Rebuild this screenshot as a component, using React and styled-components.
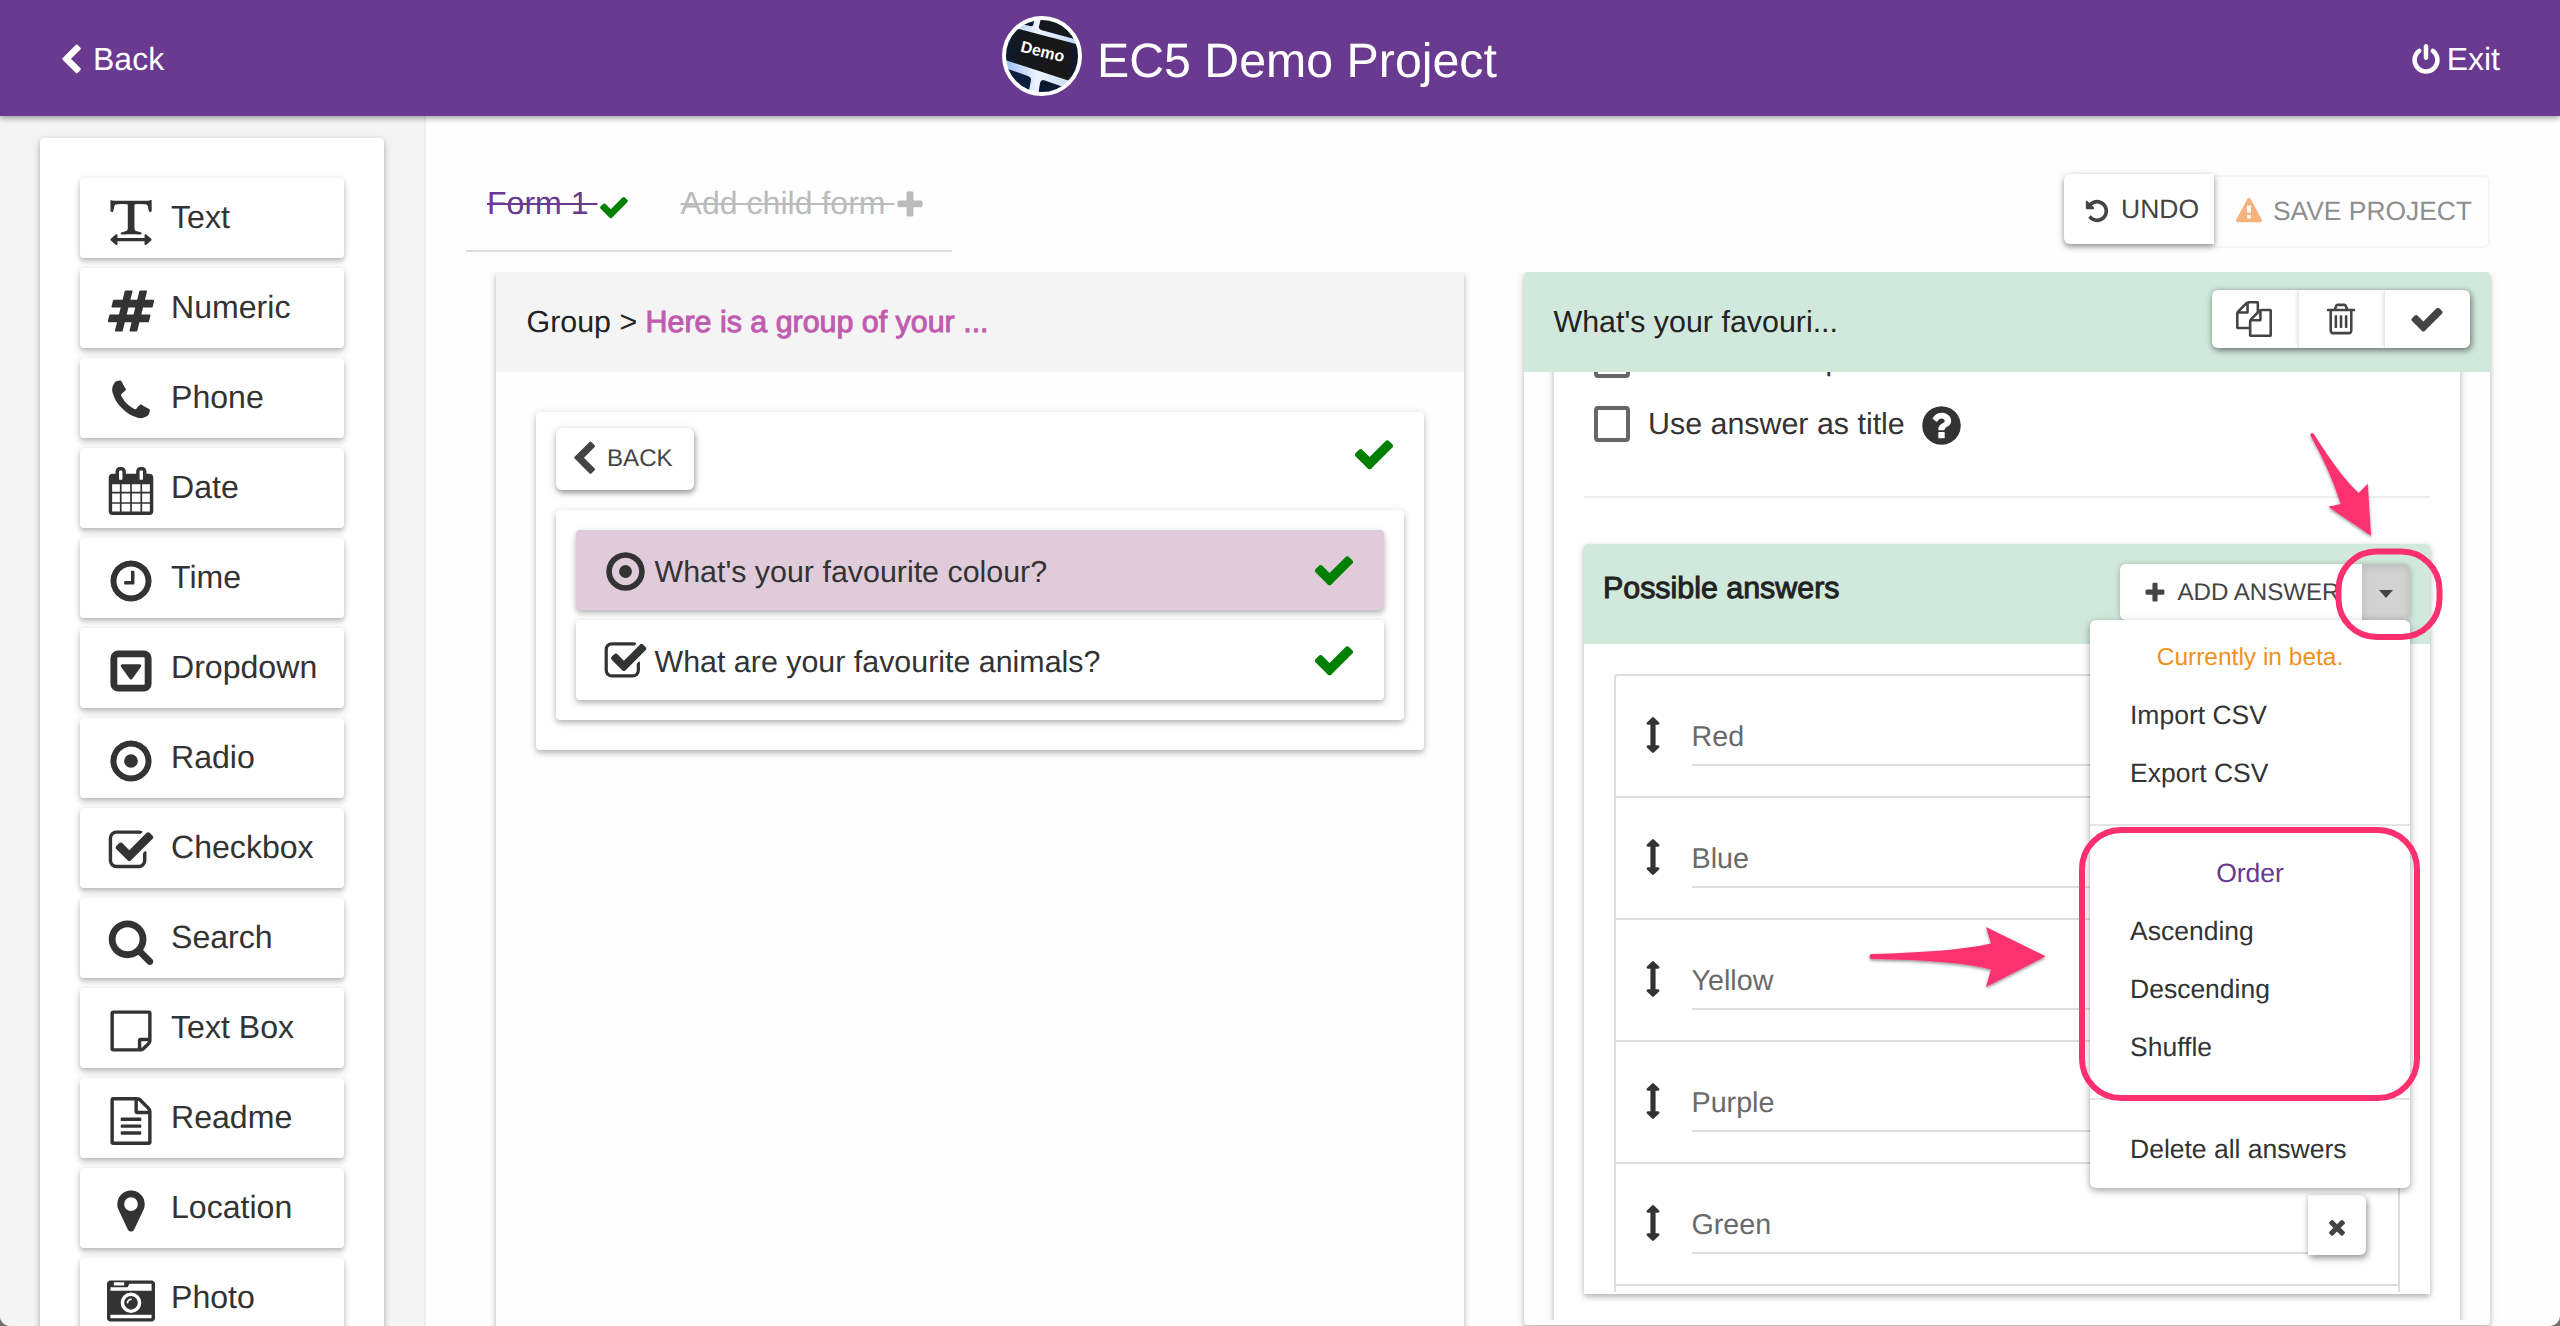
import React from "react";
import styled, { createGlobalStyle, css } from "styled-components";

const GlobalStyle = createGlobalStyle`
  *, *::before, *::after { box-sizing: border-box; }
  html, body { margin: 0; padding: 0; background: #6f6f6f; }
  body {
    font-family: "Liberation Sans", Arial, sans-serif;
    font-size: 30.4px;
    color: #333;
    overflow: hidden;
    text-rendering: geometricPrecision;
  }
  button { text-rendering: inherit; }
`;

const CIRCLE =
  "M1664 896q0 209-103 385.5t-279.5 279.5-385.5 103-385.5-103-279.5-279.5-103-385.5 103-385.5 279.5-279.5 385.5-103 385.5 103 279.5 279.5 103 385.5z";

const PATHS = {
  check:
    "M1671 566q0 40-28 68l-724 724-136 136q-28 28-68 28t-68-28l-136-136-362-362q-28-28-28-68t28-68l136-136q28-28 68-28t68 28l294 295 656-657q28-28 68-28t68 28l136 136q28 28 28 68z",
  plus:
    "M1600 736v192q0 40-28 68t-68 28h-416v416q0 40-28 68t-68 28h-192q-40 0-68-28t-28-68v-416h-416q-40 0-68-28t-28-68v-192q0-40 28-68t68-28h416v-416q0-40 28-68t68-28h192q40 0 68 28t28 68v416h416q40 0 68 28t28 68z",
  times:
    "M1490 1322q0 40-28 68l-136 136q-28 28-68 28t-68-28l-294-294-294 294q-28 28-68 28t-68-28l-136-136q-28-28-28-68t28-68l294-294-294-294q-28-28-28-68t28-68l136-136q28-28 68-28t68 28l294 294 294-294q28-28 68-28t68 28l136 136q28 28 28 68t-28 68l-294 294 294 294q28 28 28 68z",
  search:
    "M1216 832q0-185-131.5-316.5t-316.5-131.5-316.5 131.5-131.5 316.5 131.5 316.5 316.5 131.5 316.5-131.5 131.5-316.5zm512 832q0 52-38 90t-90 38q-54 0-90-38l-343-342q-179 124-399 124-143 0-273.5-55.5t-225-150-150-225-55.5-273.5 55.5-273.5 150-225 225-150 273.5-55.5 273.5 55.5 225 150 150 225 55.5 273.5q0 220-124 399l343 343q37 37 37 90z",
  back:
    "M1427 301l-531 531 531 531q19 19 19 45t-19 45l-166 166q-19 19-45 19t-45-19l-742-742q-19-19-19-45t19-45l742-742q19-19 45-19t45 19l166 166q19 19 19 45t-19 45z",
  undo:
    "M1664 896q0 156-61 298t-164 245-245 164-298 61q-172 0-327-72.5t-264-204.5q-7-10-6.5-22.5t8.5-20.5l137-138q10-9 25-9 16 2 23 12 73 95 179 147t225 52q104 0 198.5-40.5t163.5-109.5 109.5-163.5 40.5-198.5-40.5-198.5-109.5-163.5-163.5-109.5-198.5-40.5q-98 0-188 35.5t-160 101.5l137 138q31 30 14 69-17 40-59 40h-448q-26 0-45-19t-19-45v-448q0-42 40-59 39-17 69 14l130 129q107-101 244.5-156.5t284.5-55.5q156 0 298 61t245 164 164 245 61 298z",
  warning:
    "M1024 1375v-190q0-14-9.5-23.5t-22.5-9.5h-192q-13 0-22.5 9.5t-9.5 23.5v190q0 14 9.5 23.5t22.5 9.5h192q13 0 22.5-9.5t9.5-23.5zm-2-374l18-459q0-12-10-19-13-11-24-11h-220q-11 0-24 11-10 7-10 21l17 457q0 10 10 16.5t24 6.5h185q14 0 23.5-6.5t10.5-16.5zm-14-934l768 1408q35 63-2 126-17 29-46.5 46t-63.5 17h-1536q-34 0-63.5-17t-46.5-46q-37-63-2-126l768-1408q17-31 47-49t65-18 65 18 47 49z",
  power:
    "M1664 896q0 156-61 298t-164 245-245 164-298 61-298-61-245-164-164-245-61-298q0-182 80.5-343t226.5-270q43-32 95.5-25t83.5 50q32 42 24.5 94.5t-49.5 84.5q-98 74-151.5 181t-53.5 228q0 104 40.5 198.5t109.5 163.5 163.5 109.5 198.5 40.5 198.5-40.5 163.5-109.5 109.5-163.5 40.5-198.5q0-121-53.5-228t-151.5-181q-42-32-49.5-84.5t24.5-94.5q31-43 84-50t95 25q146 109 226.5 270t80.5 343zm-640-768v640q0 52-38 90t-90 38-90-38-38-90v-640q0-52 38-90t90-38 90 38 38 90z",
  help:
    "M1024 1376v-192q0-14-9-23t-23-9h-192q-14 0-23 9t-9 23v192q0 14 9 23t23 9h192q14 0 23-9t9-23zm256-672q0-88-55.5-163t-138.5-116-170-41q-243 0-371 213-15 24 8 42l132 100q7 6 19 6 16 0 25-12 53-68 86-92 34-24 86-24 48 0 85.5 26t37.5 59q0 38-20 61t-68 45q-63 28-115.5 86.5t-52.5 125.5v36q0 14 9 23t23 9h192q14 0 23-9t9-23q0-19 21.5-49.5t54.5-49.5q32-18 49-28.5t46-35 44.5-48 28-60.5 12.5-81z" +
    CIRCLE,
  date:
    "M192 1664h288v-288h-288v288zm352 0h320v-288h-320v288zm-352-352h288v-320h-288v320zm352 0h320v-320h-320v320zm-352-384h288v-288h-288v288zm736 736h320v-288h-320v288zm-384-736h320v-288h-320v288zm768 736h288v-288h-288v288zm-384-352h320v-320h-320v320zm-352-864v-288q0-13-9.5-22.5t-22.5-9.5h-64q-13 0-22.5 9.5t-9.5 22.5v288q0 13 9.5 22.5t22.5 9.5h64q13 0 22.5-9.5t9.5-22.5zm736 864h288v-320h-288v320zm-384-384h320v-288h-320v288zm384 0h288v-288h-288v288zm32-480v-288q0-13-9.5-22.5t-22.5-9.5h-64q-13 0-22.5 9.5t-9.5 22.5v288q0 13 9.5 22.5t22.5 9.5h64q13 0 22.5-9.5t9.5-22.5zm384-64v1280q0 52-38 90t-90 38h-1408q-52 0-90-38t-38-90v-1280q0-52 38-90t90-38h128v-96q0-66 47-113t113-47h64q66 0 113 47t47 113v96h384v-96q0-66 47-113t113-47h64q66 0 113 47t47 113v96h128q52 0 90 38t38 90z",
  time:
    "M1024 544v448q0 14-9 23t-23 9h-320q-14 0-23-9t-9-23v-64q0-14 9-23t23-9h224v-352q0-14 9-23t23-9h64q14 0 23 9t9 23zm416 352q0-148-73-273t-198-198-273-73-273 73-198 198-73 273 73 273 198 198 273 73 273-73 198-198 73-273z" +
    CIRCLE,
  radio:
    "M1152 896q0 106-75 181t-181 75-181-75-75-181 75-181 181-75 181 75 75 181zm-256-544q-148 0-273 73t-198 198-73 273 73 273 198 198 273 73 273-73 198-198 73-273-73-273-198-198-273-73z" +
    CIRCLE,
  dropdown:
    "M1273 675q18 35-5 66l-320 448q-19 27-52 27t-52-27l-320-448q-23-31-5-66 17-35 57-35h640q40 0 57 35zm135 701v-960q0-13-9.5-22.5t-22.5-9.5h-960q-13 0-22.5 9.5t-9.5 22.5v960q0 13 9.5 22.5t22.5 9.5h960q13 0 22.5-9.5t9.5-22.5zm256-960v960q0 119-84.5 203.5t-203.5 84.5h-960q-119 0-203.5-84.5t-84.5-203.5v-960q0-119 84.5-203.5t203.5-84.5h960q119 0 203.5 84.5t84.5 203.5z",
  checkbox:
    "M1472 930v318q0 119-84.5 203.5t-203.5 84.5h-832q-119 0-203.5-84.5t-84.5-203.5v-832q0-119 84.5-203.5t203.5-84.5h832q63 0 117 25 15 7 18 23 3 17-9 29l-49 49q-10 10-23 10-3 0-9-2-23-6-45-6h-832q-66 0-113 47t-47 113v832q0 66 47 113t113 47h832q66 0 113-47t47-113v-254q0-13 9-22l64-64q10-10 23-10 6 0 12 3 20 8 20 29zm231-489l-814 814q-24 24-57 24t-57-24l-430-430q-24-24-24-57t24-57l110-110q24-24 57-24t57 24l263 263 647-647q24-24 57-24t57 24l110 110q24 24 24 57t-24 57z",
  note:
    "M1664 224v1024q0 40-20 88t-48 76l-184 184q-28 28-76 48t-88 20h-1024q-40 0-68-28t-28-68v-1344q0-40 28-68t68-28h1344q40 0 68 28t28 68zM256 256v1280h896v-288q0-40 28-68t68-28h288v-896zM1528 1280h-248v248q29-10 41-22l185-185q12-12 22-41z",
  readme:
    "M1596 380q28 28 48 76t20 88v1152q0 40-28 68t-68 28h-1344q-40 0-68-28t-28-68v-1600q0-40 28-68t68-28h896q40 0 88 20t76 48zm-444-244v376h376q-10-29-22-41l-313-313q-12-12-41-22zm384 1528v-1024h-416q-40 0-68-28t-28-68v-416h-768v1536h1280zm-1024-864q0-14 9-23t23-9h704q14 0 23 9t9 23v64q0 14-9 23t-23 9h-704q-14 0-23-9t-9-23v-64zm736 224q14 0 23 9t9 23v64q0 14-9 23t-23 9h-704q-14 0-23-9t-9-23v-64q0-14 9-23t23-9h704zm0 256q14 0 23 9t9 23v64q0 14-9 23t-23 9h-704q-14 0-23-9t-9-23v-64q0-14 9-23t23-9h704z",
  location:
    "M1152 640q0-106-75-181t-181-75-181 75-75 181 75 181 181 75 181-75 75-181zm256 0q0 109-33 179l-364 774q-16 33-47.5 52t-67.5 19-67.5-19-46.5-52l-365-774q-33-70-33-179 0-212 150-362t362-150 362 150 150 362z",
  phone:
    "M1600 1240q0 27-10 70.5t-21 68.5q-21 50-122 106-94 51-186 51-27 0-53-3.5t-57.5-12.5-47-14.5-55.5-20.5-49-18q-98-35-175-83-127-79-264-216t-216-264q-48-77-83-175-3-9-18-49t-20.5-55.5-14.5-47-12.5-57.5-3.5-53q0-92 51-186 56-101 106-122 25-11 68.5-21t70.5-10q14 0 21 3 18 6 53 76 11 19 30 54t35 63.5 31 53.5q3 4 17.5 25t21.5 35.5 7 28.5q0 20-28.5 50t-62 55-62 53-28.5 46q0 9 5 22.5t8.5 20.5 14 24 11.5 19q76 137 174 235t235 174q2 1 19 11.5t24 14 20.5 8.5 22.5 5q18 0 46-28.5t53-62 55-62 50-28.5q14 0 28.5 7t35.5 21.5 25 17.5q25 15 53.5 31t63.5 35 54 30q70 35 76 53 3 7 3 21z",
  numeric:
    "M991 1024l64-256h-254l-64 256h254zm768-504l-56 224q-7 24-31 24h-327l-64 256h311q15 0 25 12 10 14 6 28l-56 224q-5 24-31 24h-327l-81 328q-7 24-31 24h-224q-16 0-26-12-9-12-6-28l78-312h-254l-81 328q-7 24-31 24h-225q-15 0-25-12-9-12-6-28l78-312h-311q-15 0-25-12-9-12-6-28l56-224q7-24 31-24h327l64-256h-311q-15 0-25-12-10-14-6-28l56-224q5-24 31-24h327l81-328q7-24 32-24h224q15 0 25 12 9 12 6 28l-78 312h254l81-328q7-24 32-24h224q15 0 25 12 9 12 6 28l-78 312h311q15 0 25 12 9 12 6 28z",
  photo:
    "M928 832q0-14-9-23t-23-9q-66 0-113 47t-47 113q0 14 9 23t23 9 23-9 9-23q0-40 28-68t68-28q14 0 23-9t9-23zm224 130q0 106-75 181t-181 75-181-75-75-181 75-181 181-75 181 75 75 181zm-1024 574h1536v-128h-1536v128zm1152-574q0-159-112.5-271.5t-271.5-112.5-271.5 112.5-112.5 271.5 112.5 271.5 271.5 112.5 271.5-112.5 112.5-271.5zm-1024-642h384v-128h-384v128zm-128 192h1536v-256h-828l-64 128h-644v128zm1664-256v1280q0 53-37.5 90.5t-90.5 37.5h-1536q-53 0-90.5-37.5t-37.5-90.5v-1280q0-53 37.5-90.5t90.5-37.5h1536q53 0 90.5 37.5t37.5 90.5z",
  trash:
    "M704 736v576q0 14-9 23t-23 9h-64q-14 0-23-9t-9-23v-576q0-14 9-23t23-9h64q14 0 23 9t9 23zm256 0v576q0 14-9 23t-23 9h-64q-14 0-23-9t-9-23v-576q0-14 9-23t23-9h64q14 0 23 9t9 23zm256 0v576q0 14-9 23t-23 9h-64q-14 0-23-9t-9-23v-576q0-14 9-23t23-9h64q14 0 23 9t9 23zm128 724v-948h-896v948q0 22 7 40.5t14.5 27 10.5 8.5h832q3 0 10.5-8.5t14.5-27 7-40.5zm-672-1076h448l-48-117q-7-9-17-11h-317q-10 2-17 11zm928 32v64q0 14-9 23t-23 9h-96v948q0 83-47 143.5t-113 60.5h-832q-66 0-113-58.5t-47-141.5v-952h-96q-14 0-23-9t-9-23v-64q0-14 9-23t23-9h309l70-167q15-37 54-63t79-26h320q40 0 79 26t54 63l70 167h309q14 0 23 9t9 23z",
  copy:
    "M1696 384q40 0 68 28t28 68v1216q0 40-28 68t-68 28h-960q-40 0-68-28t-28-68v-288h-544q-40 0-68-28t-28-68v-672q0-40 20-88t48-76l408-408q28-28 76-48t88-20h416q40 0 68 28t28 68v328q68-40 128-40h416zm-544 213l-299 299h299v-299zm-640-384l-299 299h299v-299zm196 647l316-316v-416h-384v416q0 40-28 68t-68 28h-416v640h512v-256q0-40 20-88t48-76zm956 804v-1152h-384v416q0 40-28 68t-68 28h-416v640h896z",
  move:
    "M1216 320q0 26-19 45t-45 19h-128v1024h128q26 0 45 19t19 45-19 45l-256 256q-19 19-45 19t-45-19l-256-256q-19-19-19-45t19-45 45-19h128v-1024h-128q-26 0-45-19t-19-45 19-45l256-256q19-19 45-19t45 19l256 256q19 19 19 45z",
  text:
    "M130 110L200 132Q215 142 400 142H1400Q1560 142 1590 134L1622 112H1664Q1670 300 1668 545Q1625 562 1590 565Q1560 520 1545 450Q1530 330 1505 300Q1480 272 1400 268Q1200 260 1040 268Q1028 272 1025 330V1150Q1025 1230 1050 1250Q1100 1285 1230 1310Q1290 1322 1290 1345Q1292 1370 1288 1394Q1150 1398 1020 1390Q900 1384 780 1390Q650 1398 515 1394Q508 1370 512 1340Q520 1320 600 1305Q700 1285 750 1255Q776 1230 776 1150V330Q774 272 762 268Q600 260 400 268Q320 272 295 300Q270 330 255 450Q240 520 210 565Q170 562 132 545Q126 300 130 110zM128 1592q0-20 16-36l178-152q28-20 52-10 16 8 16 34v104h1012v-104q0-26 16-34 24-10 52 10l178 152q16 16 16 36t-16 36l-178 152q-28 20-52 10-16-8-16-34v-104h-1012v104q0 26-16 34-24 10-52-10l-178-152q-16-16-16-36z",
};

const EVEN_ODD = ["note", "help", "radio", "time"];

const IconSvg = styled.svg`
  display: block;
  flex: none;
  width: ${(p) => p.$size}px;
  height: ${(p) => p.$size}px;
  fill: ${(p) => p.$color || "currentColor"};
`;

const Icon = ({ name, size, color }) => (
  <IconSvg $size={size} $color={color} viewBox="0 0 1792 1792" aria-hidden="true">
    <path d={PATHS[name]} fillRule={EVEN_ODD.includes(name) ? "evenodd" : "nonzero"} />
  </IconSvg>
);

const raised = css`
  box-shadow: 0 2px 10px rgba(0, 0, 0, 0.13), 0 3px 5px rgba(0, 0, 0, 0.2);
`;

const Shell = styled.div`
  position: relative;
  display: flex;
  flex-direction: column;
  width: 2560px;
  height: 1326px;
  overflow: hidden;
  background: #fefefe;
  border-radius: 0 0 10px 10px;
`;

/* ---------- header ---------- */

const Header = styled.header`
  display: grid;
  grid-template-columns: 947px 1fr auto;
  height: 116px;
  flex: none;
  padding: 0 60px 0 55px;
  color: #fff;
  background: #693a8f;
  box-shadow: 0 2px 6px rgba(0, 0, 0, 0.4);
  z-index: 5;
`;

const HeaderLink = styled.div`
  display: flex;
  align-items: center;
  gap: ${(p) => p.$gap}px;
  height: 120px;
  font-size: 32px;
  line-height: 36px;

  span {
    margin-bottom: 2px;
  }
`;

const Brand = styled.div`
  display: flex;
  align-items: flex-start;
  padding-top: 16px;
`;

const BrandTitle = styled.h1`
  margin: 15px 0 0 15px;
  font-size: 48.3px;
  font-weight: 400;
  line-height: 60px;
  white-space: nowrap;
`;

const LogoSvg = styled.svg`
  display: block;
  width: 80px;
  height: 80px;
`;

const Logo = () => (
  <LogoSvg viewBox="0 0 80 80">
    <defs>
      <clipPath id="logo-disc">
        <circle cx="40" cy="40" r="37" />
      </clipPath>
      <linearGradient id="logo-gap" x1="0" x2="1">
        <stop offset="0" stopColor="#8fb8f0" />
        <stop offset="0.45" stopColor="#eef4ff" />
        <stop offset="1" stopColor="#b9d2f5" />
      </linearGradient>
      <linearGradient id="logo-key" x1="0" x2="1">
        <stop offset="0" stopColor="#0a1c36" />
        <stop offset="0.25" stopColor="#161719" />
        <stop offset="0.8" stopColor="#171717" />
        <stop offset="1" stopColor="#0b1a3a" />
      </linearGradient>
    </defs>
    <g clipPath="url(#logo-disc)">
      <rect width="80" height="80" fill="url(#logo-gap)" />
      <path d="M0 0H33L31.5 8Q31 11 28 10L0 4z" fill="#0b1a30" />
      <path d="M39.5 0H80V25L39 14Q36.5 13 37 10.5z" fill="#14171c" />
      <path d="M0 8.5L80 29.5V69L0 43z" fill="url(#logo-key)" />
      <path d="M0 51L26 60Q29.500 61.500 29 64L26 80H0z" fill="#0b1e3c" />
      <path d="M36 80L38 67Q39 63 43 64.5L80 77.500V80z" fill="#0a1930" />
      <text
        x="40.8"
        y="41"
        transform="rotate(14 40.8 35)"
        textAnchor="middle"
        fontFamily="Liberation Sans, Arial, sans-serif"
        fontWeight="700"
        fontSize="16"
        fill="#fff"
      >
        Demo
      </text>
    </g>
    <circle cx="40" cy="40" r="38" fill="none" stroke="#fff" strokeWidth="4" />
  </LogoSvg>
);

/* ---------- sidebar ---------- */

const Body = styled.div`
  display: flex;
  flex: 1;
  min-height: 0;
`;

const Sidebar = styled.aside`
  width: 426px;
  flex: none;
  padding: 22px 40px 0;
  overflow: hidden;
  background: #f4f4f4;
  border-right: 2px solid #ededed;
`;

const Palette = styled.div`
  display: flex;
  flex-direction: column;
  gap: 10px;
  width: 344px;
  height: 1300px;
  padding: 40px;
  background: #fff;
  border-radius: 4px;
  ${raised}
`;

const PaletteItem = styled.div`
  display: flex;
  align-items: center;
  gap: 16px;
  height: 80px;
  flex: none;
  padding: 6px 0 0 27px;
  font-size: 32.1px;
  background: #fff;
  border-radius: 4px;
  ${raised}

  span {
    margin-bottom: 8px;
    line-height: 36px;
    white-space: nowrap;
  }
`;

const QUESTION_TYPES = [
  ["text", "Text"],
  ["numeric", "Numeric"],
  ["phone", "Phone"],
  ["date", "Date"],
  ["time", "Time"],
  ["dropdown", "Dropdown"],
  ["radio", "Radio"],
  ["checkbox", "Checkbox"],
  ["search", "Search"],
  ["note", "Text Box"],
  ["readme", "Readme"],
  ["location", "Location"],
  ["photo", "Photo"],
];

/* ---------- workspace ---------- */

const Workspace = styled.main`
  display: flex;
  flex-direction: column;
  flex: 1;
  min-width: 0;
  padding: 0 70px 0 40px;
`;

const TopBar = styled.div`
  display: flex;
  justify-content: space-between;
  align-items: flex-start;
  height: 156px;
  flex: none;
`;

const Tabs = styled.nav`
  display: flex;
  gap: 51px;
  width: 486px;
  height: 136px;
  padding: 68px 0 0 21px;
  border-bottom: 2px solid #ddd;
`;

const Tab = styled.div`
  display: flex;
  align-items: flex-start;
  font-size: 32.1px;
  line-height: 38px;
  white-space: pre;
  color: ${(p) => p.$color};

  span {
    text-decoration: line-through;
    text-decoration-thickness: 2px;
  }

  svg {
    margin-top: ${(p) => p.$iconTop}px;
  }
`;

const ActionGroup = styled.div`
  display: flex;
  align-items: flex-start;
  padding-top: 58px;
`;

const UndoButton = styled.button`
  display: flex;
  align-items: center;
  gap: 11px;
  width: 150px;
  height: 70px;
  padding: 4px 0 0 20px;
  border: 0;
  border-radius: 6px 0 0 6px;
  font: 26.5px/30px "Liberation Sans", Arial, sans-serif;
  color: #444;
  background: #fff;
  box-shadow: 0 2px 8px rgba(0, 0, 0, 0.2), 0 3px 5px rgba(0, 0, 0, 0.28);
  z-index: 1;

  span {
    margin-bottom: 4px;
  }
`;

const SaveButton = styled.button`
  display: flex;
  align-items: center;
  gap: 11px;
  width: 276px;
  height: 73px;
  margin-top: 1px;
  padding: 0 0 1px 22px;
  border: 2px solid #f6f6f6;
  border-left: 0;
  border-radius: 0 6px 6px 0;
  font: 26.4px/30px "Liberation Sans", Arial, sans-serif;
  color: #8e8e8e;
  background: #fefefe;
  white-space: nowrap;
`;

const Columns = styled.div`
  display: flex;
  gap: 60px;
  flex: 1;
  min-height: 0;
  padding-left: 30px;
`;

const Panel = styled.section`
  width: ${(p) => p.$width}px;
  height: ${(p) => p.$height}px;
  flex: none;
  background: #fefefe;
  border-radius: 4px;
  clip-path: inset(0 -20px -20px -20px);
  ${raised}
`;

const PanelHeader = styled.div`
  display: flex;
  justify-content: space-between;
  align-items: flex-start;
  height: 100px;
  padding: ${(p) => p.$pad};
  line-height: 36px;
  color: #222;
  white-space: pre;
  background: ${(p) => p.$bg};
  border-radius: 4px 4px 0 0;
`;

const HeaderLabel = styled.div`
  padding-top: 32px;
`;

const GroupName = styled.span`
  color: #c05cb0;
  -webkit-text-stroke: 1px #c05cb0;
`;

/* group panel */

const GroupCard = styled.div`
  display: flex;
  flex-direction: column;
  gap: 20px;
  margin: 40px 40px 0;
  height: 338px;
  padding: 16px 20px 0;
  background: #fff;
  border-radius: 4px;
  ${raised}
`;

const GroupToolbar = styled.div`
  display: flex;
  justify-content: space-between;
  height: 62px;

  > svg {
    margin: 4px 8px 0 0;
  }
`;

const BackButton = styled.button`
  display: flex;
  align-items: center;
  gap: 5px;
  width: 138px;
  height: 62px;
  padding: 0 0 0 10px;
  border: 0;
  border-radius: 6px;
  font: 24.1px/28px "Liberation Sans", Arial, sans-serif;
  color: #444;
  background: #fff;
  box-shadow: 0 2px 8px rgba(0, 0, 0, 0.2), 1px 3px 5px rgba(0, 0, 0, 0.28);
`;

const QuestionList = styled.div`
  display: flex;
  flex-direction: column;
  gap: 10px;
  height: 210px;
  padding: 20px;
  background: #fff;
  border-radius: 4px;
  ${raised}
`;

const Question = styled.div`
  display: flex;
  align-items: center;
  gap: 6.5px;
  height: 80px;
  padding: 3px 28px 0 27px;
  background: ${(p) => (p.$active ? "#dfcbd9" : "#fff")};
  border-radius: 4px;
  ${raised}

  span {
    flex: 1;
    line-height: 36px;
  }

  > svg:last-child {
    margin-bottom: 3px;
  }
`;

/* question panel */

const ToolGroup = styled.div`
  display: flex;
  margin-top: 18px;
  border-radius: 6px;
  background: #fff;
  box-shadow: 0 1px 6px rgba(0, 0, 0, 0.3), 2px 3px 6px rgba(0, 0, 0, 0.3);
`;

const Tool = styled.button`
  display: grid;
  place-items: center;
  width: 86px;
  height: 58px;
  padding: 0 2px 0 0;
  border: 0;
  color: #444;
  background: none;

  & + & {
    border-left: 1px solid #e6e6e6;
    box-shadow: -3px 0 4px -2px rgba(0, 0, 0, 0.12);
  }
`;

const ScrollArea = styled.div`
  height: 948px;
  padding: 0 30px;
  overflow: hidden;
`;

const Sheet = styled.div`
  height: 1060px;
  margin-top: -60px;
  padding: 16px 30px 0;
  background: #fff;
  ${raised}
`;

const OptionRow = styled.label`
  display: flex;
  align-items: center;
  height: 64px;
  padding: 0 0 0 10px;

  span {
    margin: 0 14.5px 0 18px;
    line-height: 36px;
    padding-bottom: 1px;
  }

  svg {
    margin-top: 3px;
  }
`;

const CheckBox = styled.i`
  width: 36px;
  height: 36px;
  border: 4px solid #666;
  border-radius: 4px;
`;

const Rule = styled.hr`
  height: 2px;
  margin: 40px 0 46px;
  border: 0;
  background: #eee;
`;

const AnswersCard = styled.div`
  height: 750px;
  background: #fff;
  border-radius: 4px 4px 0 0;
  ${raised}
`;

const AnswersHeader = styled.div`
  position: relative;
  display: flex;
  justify-content: space-between;
  height: 100px;
  padding: 20px 20px 0 19px;
  background: #d1e8dc;
  border-radius: 4px 4px 0 0;
`;

const AnswersTitle = styled.div`
  margin-top: 6px;
  line-height: 36px;
  color: #222;
  -webkit-text-stroke: 1px #222;
`;

const AddGroup = styled.div`
  display: flex;
  height: 56px;
  border-radius: 6px;
  box-shadow: 0 1px 6px rgba(0, 0, 0, 0.25);
`;

const AddButton = styled.button`
  display: flex;
  align-items: center;
  gap: 10.5px;
  width: 242px;
  height: 56px;
  padding: 1px 0 0 23px;
  border: 0;
  border-radius: 6px 0 0 6px;
  font: 24.1px/28px "Liberation Sans", Arial, sans-serif;
  color: #444;
  background: #fff;
  white-space: nowrap;
`;

const CaretButton = styled.button`
  display: grid;
  place-items: center;
  width: 48px;
  height: 56px;
  padding: 3px 0 0;
  border: 0;
  border-radius: 0 6px 6px 0;
  background: #d2d2d2;
  box-shadow: inset 0 2px 8px rgba(0, 0, 0, 0.12);

  &::before {
    content: "";
    border: 7.5px solid transparent;
    border-top: 8px solid #444;
    border-bottom: 0;
  }
`;

const Menu = styled.div`
  position: absolute;
  top: 76px;
  right: 20px;
  width: 320px;
  height: 568px;
  padding-top: 8px;
  background: #fff;
  border-radius: 6px;
  box-shadow: 0 2px 8px rgba(0, 0, 0, 0.22), 0 3px 6px rgba(0, 0, 0, 0.16);
  z-index: 2;
`;

const MenuItem = styled.div`
  height: 58px;
  padding: 0 40px;
  font-size: ${(p) => (p.$note ? 24.5 : 26.5)}px;
  line-height: ${(p) => (p.$note ? 60 : 58)}px;
  text-align: ${(p) => (p.$heading ? "center" : "left")};
  color: ${(p) => p.$heading || "#333"};
`;

const MenuRule = styled.hr`
  height: 2px;
  margin: 22px 0 ${(p) => p.$after}px;
  border: 0;
  background: #e5e5e5;
`;

const AnswerList = styled.div`
  height: 618px;
  margin: 30px 30px 0;
  overflow: hidden;
  border: 2px solid #ddd;
  border-bottom: 0;
  border-radius: 4px 4px 0 0;
`;

const AnswerRow = styled.div`
  display: flex;
  height: 122px;
  padding: 32px 32px 0 19px;
  border-bottom: 2px solid #ddd;

  > svg {
    margin-top: 9px;
  }
`;

const AnswerInput = styled.div`
  flex: 1;
  height: 58px;
  margin-left: 21px;
  padding-top: 12px;
  font-size: 28.7px;
  line-height: 34px;
  text-indent: -0.5px;
  color: #6a6a6a;
  border-bottom: 2px solid #ddd;
`;

const RemoveButton = styled.button`
  display: grid;
  place-items: center;
  width: 58px;
  height: 60px;
  margin-top: -1px;
  padding: 3px 0 0;
  border: 0;
  border-radius: 0 6px 6px 0;
  color: #444;
  background: #fff;
  box-shadow: 0 1px 6px rgba(0, 0, 0, 0.2), 2px 4px 6px rgba(0, 0, 0, 0.28);
`;

/* highlights drawn above the page */

const Highlights = styled.svg`
  position: absolute;
  inset: 0;
  width: 2560px;
  height: 1326px;
  z-index: 10;
  pointer-events: none;
`;

const PINK = "#fc306f";
const ANSWERS = ["Red", "Blue", "Yellow", "Purple", "Green", ""];

export default function App() {
  return (
    <>
      <GlobalStyle />
      <Shell>
        <Header>
          <HeaderLink $gap={6}>
            <Icon name="back" size={32} />
            <span>Back</span>
          </HeaderLink>
          <Brand>
            <Logo />
            <BrandTitle>EC5 Demo Project</BrandTitle>
          </Brand>
          <HeaderLink $gap={5}>
            <Icon name="power" size={32} />
            <span>Exit</span>
          </HeaderLink>
        </Header>

        <Body>
          <Sidebar>
            <Palette>
              {QUESTION_TYPES.map(([icon, label]) => (
                <PaletteItem key={label}>
                  <Icon name={icon} size={48} />
                  <span>{label}</span>
                </PaletteItem>
              ))}
            </Palette>
          </Sidebar>

          <Workspace>
            <TopBar>
              <Tabs>
                <Tab $color="#693a8f" $iconTop={7}>
                  <span>{"Form 1 "}</span>
                  <Icon name="check" size={32} color="#008000" />
                </Tab>
                <Tab $color="#bbb" $iconTop={5}>
                  <span>{"Add child form "}</span>
                  <Icon name="plus" size={32} />
                </Tab>
              </Tabs>
              <ActionGroup>
                <UndoButton>
                  <Icon name="undo" size={26} />
                  <span>UNDO</span>
                </UndoButton>
                <SaveButton>
                  <Icon name="warning" size={26} color="#f4b27c" />
                  <span>SAVE PROJECT</span>
                </SaveButton>
              </ActionGroup>
            </TopBar>

            <Columns>
              <Panel $width={968} $height={1060}>
                <PanelHeader $bg="#f4f4f4" $pad="0 30px 0 30.5px">
                  <HeaderLabel>
                    {"Group > "}
                    <GroupName>Here is a group of your ...</GroupName>
                  </HeaderLabel>
                </PanelHeader>
                <GroupCard>
                  <GroupToolbar>
                    <BackButton>
                      <Icon name="back" size={36} />
                      <span>BACK</span>
                    </BackButton>
                    <Icon name="check" size={44} color="#008000" />
                  </GroupToolbar>
                  <QuestionList>
                    <Question $active>
                      <Icon name="radio" size={45} />
                      <span>What's your favourite colour?</span>
                      <Icon name="check" size={44} color="#008000" />
                    </Question>
                    <Question>
                      <Icon name="checkbox" size={45} />
                      <span>What are your favourite animals?</span>
                      <Icon name="check" size={44} color="#008000" />
                    </Question>
                  </QuestionList>
                </GroupCard>
              </Panel>

              <Panel $width={966} $height={1053}>
                <PanelHeader $bg="#d1e8dc" $pad="0 20px 0 29.5px">
                  <HeaderLabel>What's your favouri...</HeaderLabel>
                  <ToolGroup>
                    <Tool><Icon name="copy" size={36} /></Tool>
                    <Tool><Icon name="trash" size={36} /></Tool>
                    <Tool><Icon name="check" size={36} /></Tool>
                  </ToolGroup>
                </PanelHeader>
                <ScrollArea>
                  <Sheet>
                    <OptionRow>
                      <CheckBox />
                      <span>Answer is required</span>
                    </OptionRow>
                    <OptionRow>
                      <CheckBox />
                      <span>Use answer as title</span>
                      <Icon name="help" size={45} />
                    </OptionRow>
                    <Rule />
                    <AnswersCard>
                      <AnswersHeader>
                        <AnswersTitle>Possible answers</AnswersTitle>
                        <AddGroup>
                          <AddButton>
                            <Icon name="plus" size={24} />
                            <span>ADD ANSWER</span>
                          </AddButton>
                          <CaretButton aria-label="More" />
                        </AddGroup>
                        <Menu>
                          <MenuItem $heading="#f0921e" $note>Currently in beta.</MenuItem>
                          <MenuItem>Import CSV</MenuItem>
                          <MenuItem>Export CSV</MenuItem>
                          <MenuRule $after={18} />
                          <MenuItem $heading="#693a8f">Order</MenuItem>
                          <MenuItem>Ascending</MenuItem>
                          <MenuItem>Descending</MenuItem>
                          <MenuItem>Shuffle</MenuItem>
                          <MenuRule $after={20} />
                          <MenuItem>Delete all answers</MenuItem>
                        </Menu>
                      </AnswersHeader>
                      <AnswerList>
                        {ANSWERS.map((answer) => (
                          <AnswerRow key={answer}>
                            <Icon name="move" size={36} />
                            <AnswerInput>{answer}</AnswerInput>
                            <RemoveButton>
                              <Icon name="times" size={24} />
                            </RemoveButton>
                          </AnswerRow>
                        ))}
                      </AnswerList>
                    </AnswersCard>
                  </Sheet>
                </ScrollArea>
              </Panel>
            </Columns>
          </Workspace>
        </Body>

        <Highlights viewBox="0 0 2560 1326">
          <defs>
            <filter id="drop" x="-20%" y="-20%" width="140%" height="140%">
              <feDropShadow dx="0" dy="1.5" stdDeviation="1.5" floodOpacity="0.45" />
            </filter>
          </defs>
          <g fill="none" stroke={PINK} strokeWidth="6">
            <rect x="2338.5" y="551.5" width="101" height="85.5" rx="38" />
            <rect x="2082" y="830" width="335" height="268" rx="39" />
          </g>
          <g fill={PINK} filter="url(#drop)">
            <path d="M2313.5 433.5Q2311 432 2310.3 435Q2330 470 2340.7 504L2328.3 506.7L2371 535.7L2367.7 483.7L2358.7 493Q2340 476 2313.5 433.5z" />
            <path d="M1871 954Q1868 956.5 1871 959Q1955 960 1991 969.5L1986 987L2045.7 956.3L1986 927L1991 943.5Q1955 952 1871 954z" />
          </g>
        </Highlights>
      </Shell>
    </>
  );
}
